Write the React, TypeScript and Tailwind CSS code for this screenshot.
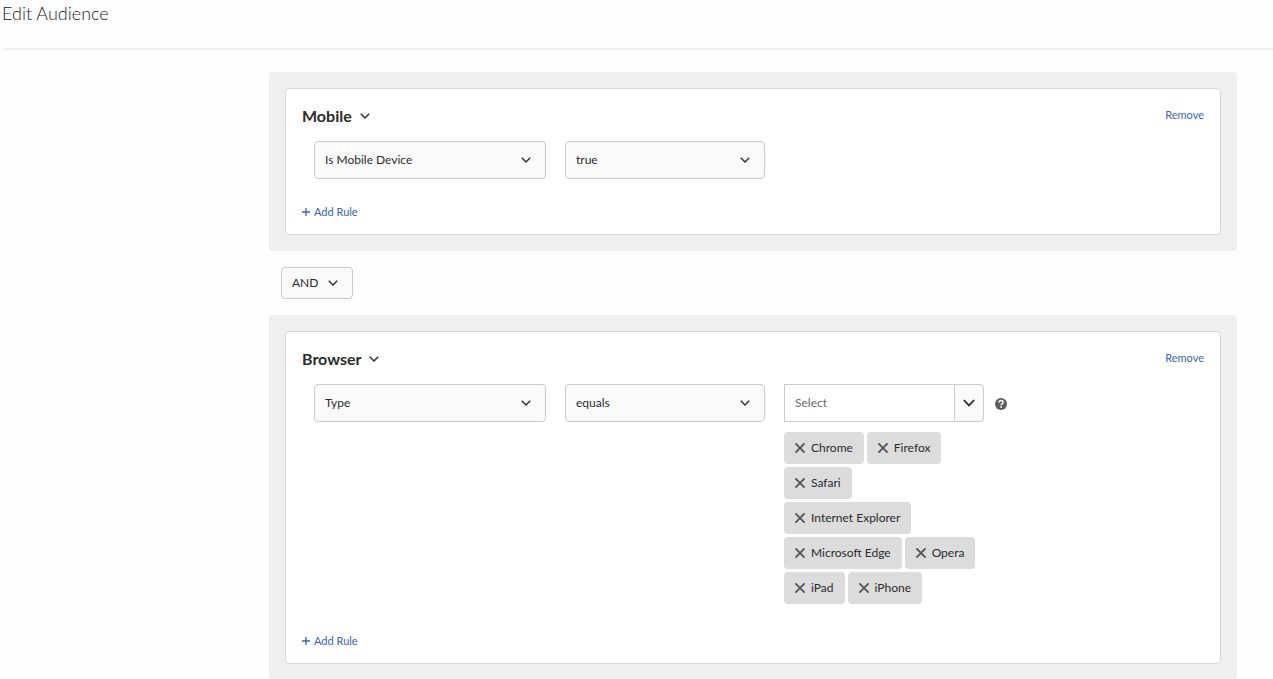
import type { ReactNode } from 'react';

const BROWSERS = [
  'Chrome',
  'Firefox',
  'Safari',
  'Internet Explorer',
  'Microsoft Edge',
  'Opera',
  'iPad',
  'iPhone',
];

function Chevron({ className = '' }: { className?: string }) {
  return (
    <svg
      className={className}
      width="10"
      height="6"
      viewBox="0 0 10 6"
      fill="none"
      stroke="currentColor"
      strokeWidth="1.4"
      aria-hidden="true"
    >
      <path d="M0.8 0.8 L5 4.9 L9.2 0.8" />
    </svg>
  );
}

interface DropdownProps {
  label: string;
  options: string[];
  className: string;
}

function Dropdown({ label, options, className }: DropdownProps) {
  return (
    <div className={`relative ${className}`}>
      <select
        aria-label={label}
        className="block h-full w-full appearance-none rounded border border-[#cbcbcb] bg-[#fafafa] pl-[10px] pr-7 text-[#2b2b2b]"
      >
        {options.map((option) => (
          <option key={option}>{option}</option>
        ))}
      </select>
      <Chevron className="pointer-events-none absolute inset-y-0 right-[15px] my-auto" />
    </div>
  );
}

interface RuleGroupProps {
  title: string;
  children: ReactNode;
}

function RuleGroup({ title, children }: RuleGroupProps) {
  return (
    <section className="rounded bg-[#efefef] p-4">
      <div className="rounded border border-[#d6d6d6] bg-white px-4 pt-4 pb-[13px]">
        <div className="flex items-start justify-between">
          <h2 className="text-base leading-[22px] font-bold">
            <button type="button" className="flex items-center gap-2">
              {title}
              <Chevron />
            </button>
          </h2>
          <button type="button" className="text-[11px] leading-5 text-[#3a62b0]">
            Remove
          </button>
        </div>
        <div className="mt-[14px] flex items-start gap-[19px] pl-3">{children}</div>
        <button
          type="button"
          className="mt-6 flex items-center gap-1 text-[11px] leading-[18px] text-[#3a62b0]"
        >
          <svg width="8" height="8" viewBox="0 0 8 8" stroke="currentColor" strokeWidth="1.3" aria-hidden="true">
            <path d="M4 0V8M0 4H8" />
          </svg>
          Add Rule
        </button>
      </div>
    </section>
  );
}

function BrowserPicker() {
  return (
    <div className="w-[200px] pb-1">
      <div className="flex h-[38px]">
        <input
          type="text"
          aria-label="Browser"
          placeholder="Select"
          className="min-w-0 flex-1 border border-r-0 border-[#cbcbcb] bg-white px-[10px] placeholder:text-[#686868]"
        />
        <button
          type="button"
          aria-label="Show browsers"
          className="flex w-[30px] items-center justify-center rounded-r border border-[#cbcbcb] bg-[#fafafa]"
        >
          <svg width="12" height="8" viewBox="0 0 12 8" fill="none" stroke="currentColor" strokeWidth="1.8" aria-hidden="true">
            <path d="M0.8 1 L6 6.4 L11.2 1" />
          </svg>
        </button>
      </div>
      <ul className="mt-[10px] flex flex-wrap gap-[3px] pr-1">
        {BROWSERS.map((name) => (
          <li key={name}>
            <button
              type="button"
              aria-label={`Remove ${name}`}
              className="flex h-8 items-center gap-[6px] rounded bg-[#dcdcdc] px-[11px] pb-px whitespace-nowrap"
            >
              <svg width="10" height="10" viewBox="0 0 10 10" stroke="#555555" strokeWidth="1.9" aria-hidden="true">
                <path d="M0.4 0.4L9.6 9.6M9.6 0.4L0.4 9.6" />
              </svg>
              {name}
            </button>
          </li>
        ))}
      </ul>
    </div>
  );
}

export default function App() {
  return (
    <div className="overflow-hidden bg-[#fefefe] font-['Lato',sans-serif] text-[12px] leading-[18px] text-[#2b2b2b]">
      <header className="ml-[3px] h-[50px] border-b-2 border-[#efefef]">
        <h1 className="-ml-px text-[18px] leading-[26px] font-light text-[#1a1a1a]">Edit Audience</h1>
      </header>
      <main className="mt-[22px] mr-9 ml-[269px]">
        <RuleGroup title="Mobile">
          <Dropdown label="Attribute" options={['Is Mobile Device']} className="h-[38px] w-[232px]" />
          <Dropdown label="Value" options={['true', 'false']} className="h-[38px] w-[200px]" />
        </RuleGroup>
        <div className="py-4 pl-3">
          <Dropdown label="Combine groups with" options={['AND', 'OR']} className="h-8 w-[72px]" />
        </div>
        <RuleGroup title="Browser">
          <Dropdown label="Attribute" options={['Type']} className="h-[38px] w-[232px]" />
          <Dropdown label="Operator" options={['equals', 'does not equal']} className="h-[38px] w-[200px]" />
          <div className="flex items-start gap-[11px]">
            <BrowserPicker />
            <button type="button" aria-label="Help" className="flex h-10 items-center">
              <svg width="12" height="12" viewBox="0 0 12 12" aria-hidden="true">
                <circle cx="6" cy="6" r="6" fill="#5c5c5c" />
                <path
                  d="M4 4.6C4 3.2 4.9 2.6 6.1 2.6C7.4 2.6 8.1 3.4 8.1 4.4C8.1 5.7 6.2 5.7 6.2 7.2"
                  fill="none"
                  stroke="#fff"
                  strokeWidth="1.5"
                />
                <circle cx="6.2" cy="9" r="0.9" fill="#fff" />
              </svg>
            </button>
          </div>
        </RuleGroup>
      </main>
    </div>
  );
}
